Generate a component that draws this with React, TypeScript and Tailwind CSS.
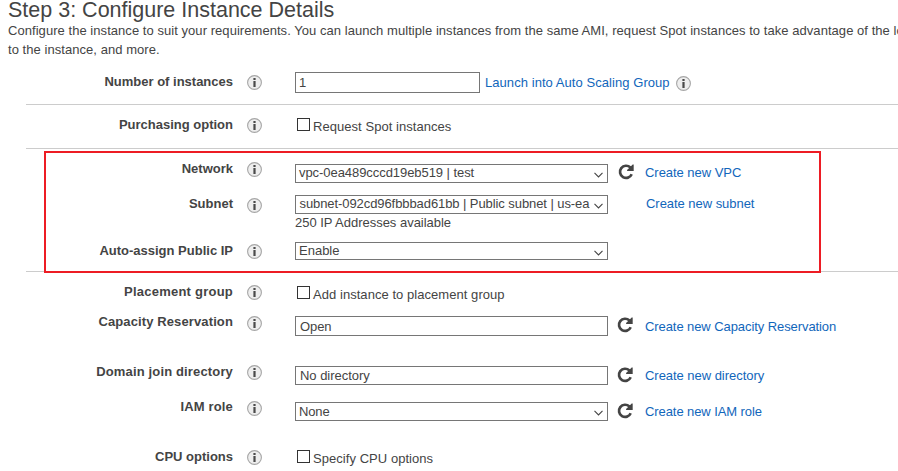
import type { ReactNode } from "react";

function InfoIcon({ className = "" }: { className?: string }) {
  return (
    <svg className={`block size-[15px] shrink-0 ${className}`} viewBox="0 0 15 15">
      <circle cx="7.5" cy="7.5" r="6.9" fill="#eeeeee" stroke="#a6a6a6" strokeWidth="1.1" />
      <rect x="6.4" y="3" width="2.2" height="2" fill="#4a4a4a" />
      <rect x="6.4" y="6" width="2.2" height="6" fill="#4a4a4a" />
    </svg>
  );
}

function RefreshIcon({ className = "" }: { className?: string }) {
  return (
    <svg className={`block size-4 shrink-0 ${className}`} viewBox="0 0 16 16">
      <path d="M12.4 3.5A6.1 6.1 0 1 0 13.7 10.3" fill="none" stroke="#444" strokeWidth="2.7" />
      <path d="M15.7 0.6V6.9H9.1V5.9L14.7 0.6Z" fill="#444" />
    </svg>
  );
}

function Chevron({ className = "" }: { className?: string }) {
  return (
    <svg className={`block h-[6px] w-[9px] shrink-0 ${className}`} viewBox="0 0 9 6">
      <path d="M0.5 0.9L4.5 4.9L8.5 0.9" fill="none" stroke="#444" strokeWidth="1.1" />
    </svg>
  );
}

function Row({
  label,
  height,
  labelClass,
  infoPad,
  children,
}: {
  label: string;
  height: string;
  labelClass: string;
  infoPad: string;
  children: ReactNode;
}) {
  return (
    <div className={`flex items-start ${height}`}>
      <div className={`w-[207px] shrink-0 text-right font-bold ${labelClass}`}>{label}</div>
      <div className={`ml-[14px] w-12 shrink-0 ${infoPad}`}>
        <InfoIcon />
      </div>
      {children}
    </div>
  );
}

function Field({
  value,
  className,
  chevron,
}: {
  value: string;
  className: string;
  chevron?: string;
}) {
  return (
    <div
      className={`flex w-[313px] shrink-0 items-start justify-between border border-[#767676] pr-1 ${className}`}
    >
      <span>{value}</span>
      {chevron && <Chevron className={chevron} />}
    </div>
  );
}

function Link({ children, className = "" }: { children: ReactNode; className?: string }) {
  return (
    <a className={`shrink-0 text-[#1166bb] ${className}`} href="#">
      {children}
    </a>
  );
}

function CheckOption({ children, className }: { children: string; className: string }) {
  return (
    <div className={`flex items-start pl-[2px] ${className}`}>
      <span className="size-[13px] border border-[#333]" />
      <span className="mt-px ml-[3px] tracking-[0.05px]">{children}</span>
    </div>
  );
}

function Section({ children }: { children: ReactNode }) {
  return <section className="ml-[26px] border-t border-[#ccc]">{children}</section>;
}

export default function App() {
  return (
    <div className="relative h-[471px] w-[898px] overflow-hidden bg-white font-['Liberation_Sans',Arial,sans-serif] text-[13px] leading-[15px] whitespace-nowrap text-[#444]">
      <header className="h-[71px] pl-2">
        <h1 className="h-[21px] text-[21.5px] leading-5">Step 3: Configure Instance Details</h1>
        <p className="leading-[19px] tracking-[0.05px]">
          Configure the instance to suit your requirements. You can launch multiple instances from
          the same AMI, request Spot instances to take advantage of the lower pricing
          <br />
          to the instance, and more.
        </p>
      </header>

      <section className="ml-[26px] pt-px">
        <Row label="Number of instances" height="h-8" labelClass="pt-[2px]" infoPad="pt-[3px]">
          <div className="h-[21px] w-[185px] border border-[#767676] pt-[2px] pl-[3px]">1</div>
          <Link className="mt-[3px] ml-[5px] tracking-[0.06px]">Launch into Auto Scaling Group</Link>
          <InfoIcon className="mt-1 ml-[6px]" />
        </Row>
      </section>

      <Section>
        <Row label="Purchasing option" height="h-[43px]" labelClass="pt-3" infoPad="pt-[13px]">
          <CheckOption className="pt-[13px]">Request Spot instances</CheckOption>
        </Row>
      </Section>

      <Section>
        <Row label="Network" height="h-[41px]" labelClass="pt-3" infoPad="pt-[13px]">
          <Field
            value="vpc-0ea489cccd19eb519 | test"
            className="mt-[15px] h-[19px] pl-[3px] tracking-[-0.06px]"
            chevron="mt-[7px]"
          />
          <RefreshIcon className="mt-[15px] ml-[10px]" />
          <Link className="mt-4 ml-[11px] tracking-[-0.04px]">Create new VPC</Link>
        </Row>
        <Row label="Subnet" height="h-[47px]" labelClass="pt-[6px]" infoPad="pt-2">
          <div className="pt-[5px]">
            <Field
              value="subnet-092cd96fbbbad61bb | Public subnet | us-ea"
              className="h-[19px] pl-[3.5px] tracking-[-0.08px]"
              chevron="mt-[7px]"
            />
            <div className="pt-px tracking-[-0.02px]">250 IP Addresses available</div>
          </div>
          <Link className="mt-[6px] ml-[38px] tracking-[-0.04px]">Create new subnet</Link>
        </Row>
        <Row label="Auto-assign Public IP" height="h-[34px]" labelClass="pt-[6px]" infoPad="pt-[7px]">
          <Field value="Enable" className="mt-[5px] h-[18px] pl-[3px]" chevron="mt-[7px]" />
        </Row>
      </Section>

      <Section>
        <Row
          label="Placement group"
          height="h-[37px]"
          labelClass="pt-3 tracking-[0.23px]"
          infoPad="pt-[13px]"
        >
          <CheckOption className="pt-[14px]">Add instance to placement group</CheckOption>
        </Row>
        <Row
          label="Capacity Reservation"
          height="h-[50px]"
          labelClass="pt-[5px] tracking-[0.12px]"
          infoPad="pt-[7px]"
        >
          <Field value="Open" className="mt-[7px] h-5 pt-[2px] pl-1 tracking-[-0.1px]" />
          <RefreshIcon className="mt-2 ml-[9px]" />
          <Link className="mt-[10px] ml-3 tracking-[-0.08px]">Create new Capacity Reservation</Link>
        </Row>
        <Row
          label="Domain join directory"
          height="h-9"
          labelClass="pt-[5px] tracking-[0.15px]"
          infoPad="pt-[6px]"
        >
          <Field value="No directory" className="mt-[7px] h-[19px] pt-px pl-1 tracking-[-0.03px]" />
          <RefreshIcon className="mt-2 ml-[9px]" />
          <Link className="mt-[9px] ml-3 tracking-[-0.04px]">Create new directory</Link>
        </Row>
        <Row
          label="IAM role"
          height="h-[49px]"
          labelClass="pt-1 tracking-[0.15px]"
          infoPad="pt-[6px]"
        >
          <Field
            value="None"
            className="mt-[7px] h-[19px] pt-px pl-[3px] tracking-[-0.15px]"
            chevron="mt-[6px]"
          />
          <RefreshIcon className="mt-2 ml-[9px]" />
          <Link className="mt-[9px] ml-3 tracking-[-0.08px]">Create new IAM role</Link>
        </Row>
        <Row label="CPU options" height="h-[27px]" labelClass="pt-[5px]" infoPad="pt-[6px]">
          <CheckOption className="pt-[6px]">Specify CPU options</CheckOption>
        </Row>
      </Section>

      {/* Highlight drawn over the network settings */}
      <div className="absolute top-[151px] left-[44px] h-[122px] w-[777px] border-2 border-[#ed1c24]" />
    </div>
  );
}
